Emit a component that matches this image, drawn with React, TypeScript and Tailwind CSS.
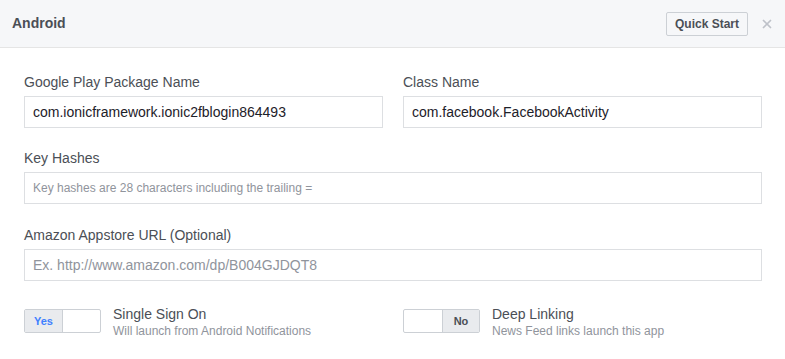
import { X } from "lucide-react";

function Field({
  label,
  value,
  placeholder,
  big,
}: {
  label: string;
  value?: string;
  placeholder?: string;
  big?: boolean;
}) {
  return (
    <div className="flex flex-col">
      <label className="text-[14px] leading-[18px] text-[#4b4f56] mb-[5px]">{label}</label>
      <div className="h-[32px] border border-[#dddfe2] bg-white flex items-center px-[8px]">
        {value ? (
          <span className="text-[14px] text-[#1d2129]">{value}</span>
        ) : (
          <span className={big ? "text-[14px] text-[#90949c]" : "text-[12px] text-[#90949c]"}>{placeholder}</span>
        )}
      </div>
    </div>
  );
}

function Toggle({ on }: { on: boolean }) {
  return (
    <div className="w-[77px] h-[24px] border border-[#ccd0d5] rounded-[2px] flex bg-white overflow-hidden shrink-0">
      {on ? (
        <>
          <div className="w-[38px] bg-[#e9ebee] border-r border-[#ccd0d5] flex items-center justify-center text-[11px] font-bold text-[#4080ff]">
            Yes
          </div>
          <div className="flex-1" />
        </>
      ) : (
        <>
          <div className="flex-1" />
          <div className="w-[37px] bg-[#e9ebee] border-l border-[#ccd0d5] flex items-center justify-center text-[11px] font-bold text-[#4b4f56]">
            No
          </div>
        </>
      )}
    </div>
  );
}

export default function App() {
  return (
    <div className="w-[785px] h-[359px] bg-white font-['Liberation_Sans',Arial,sans-serif] overflow-hidden">
      <div className="h-[48px] bg-[#f6f7f9] border-b border-[#e5e5e5] flex items-center pl-[12px] pr-[11px]">
        <h2 className="text-[14px] font-bold text-[#4b4f56] flex-1">Android</h2>
        <button className="h-[24px] px-[8px] border border-[#ccd0d5] bg-[#f6f7f9] rounded-[2px] text-[12px] font-bold text-[#4b4f56] mr-[12px]">
          Quick Start
        </button>
        <X className="w-[14px] h-[14px] text-[#bec2c9]" strokeWidth={3} />
      </div>
      <div className="pl-[24px] pr-[23px] pt-[25px]">
        <div className="grid grid-cols-2 gap-x-[20px]">
          <Field label="Google Play Package Name" value="com.ionicframework.ionic2fblogin864493" />
          <Field label="Class Name" value="com.facebook.FacebookActivity" />
        </div>
        <div className="mt-[21px]">
          <Field label="Key Hashes" placeholder="Key hashes are 28 characters including the trailing =" />
        </div>
        <div className="mt-[22px]">
          <Field label="Amazon Appstore URL (Optional)" placeholder="Ex. http://www.amazon.com/dp/B004GJDQT8" big />
        </div>
        <div className="grid grid-cols-2 gap-x-[20px] mt-[28px]">
          <div className="flex items-start gap-[12px]">
            <Toggle on={true} />
            <div className="-mt-[4px]">
              <div className="text-[14px] leading-[18px] text-[#4b4f56]">Single Sign On</div>
              <div className="text-[12px] leading-[16px] text-[#90949c]">Will launch from Android Notifications</div>
            </div>
          </div>
          <div className="flex items-start gap-[12px]">
            <Toggle on={false} />
            <div className="-mt-[4px]">
              <div className="text-[14px] leading-[18px] text-[#4b4f56]">Deep Linking</div>
              <div className="text-[12px] leading-[16px] text-[#90949c]">News Feed links launch this app</div>
            </div>
          </div>
        </div>
      </div>
    </div>
  );
}
